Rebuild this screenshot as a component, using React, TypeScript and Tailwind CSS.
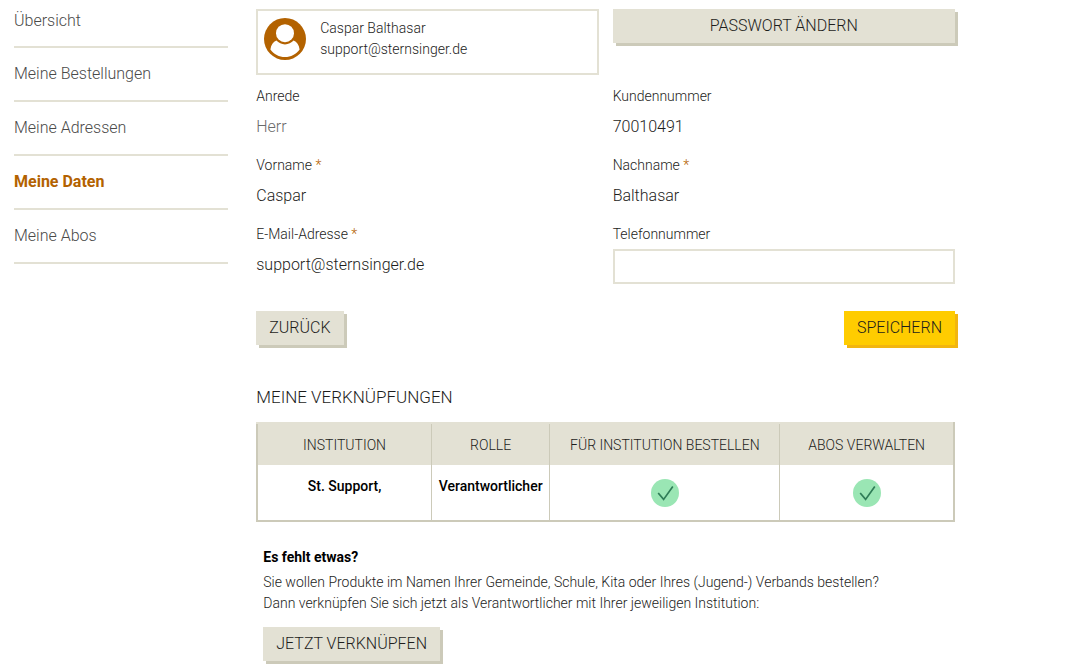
import React, { useState } from 'react';

interface NavItem {
  label: string;
  href: string;
}

interface Verknuepfung {
  institution: string;
  rolle: string;
  bestellen: boolean;
  abos: boolean;
}

const navItems: NavItem[] = [
  { label: 'Übersicht', href: '#uebersicht' },
  { label: 'Meine Bestellungen', href: '#bestellungen' },
  { label: 'Meine Adressen', href: '#adressen' },
  { label: 'Meine Daten', href: '#daten' },
  { label: 'Meine Abos', href: '#abos' },
];

const verknuepfungen: Verknuepfung[] = [
  { institution: 'St. Support,', rolle: 'Verantwortlicher', bestellen: true, abos: true },
];

const buttonBase = 'h-[34px] px-[13px] text-base text-[#1d1d1b] uppercase cursor-pointer';
const buttonSand = `${buttonBase} bg-[#e3e1d4] shadow-[3px_3px_0_#cccab9]`;
const buttonGelb = `${buttonBase} bg-[#ffcc00] shadow-[3px_3px_0_#f2b50f]`;

function Avatar() {
  return (
    <svg viewBox="0 0 42 42" className="w-[42px] h-[42px] shrink-0" aria-hidden="true">
      <circle cx="21" cy="21" r="21" fill="#b36200" />
      <circle cx="21" cy="15.2" r="9" fill="#fff" />
      <path
        d="M12.4 22.6C14.6 25 17.6 26.4 21 26.4s6.4-1.4 8.6-3.8c3.2 1.2 5.4 4.4 6 8.8C32 36.2 27 39 21 39S10 36.2 6.4 31.4c.6-4.4 2.8-7.6 6-8.8z"
        fill="#fff"
      />
    </svg>
  );
}

function CheckIcon() {
  return (
    <svg viewBox="0 0 28 28" className="w-7 h-7 mx-auto" role="img" aria-label="Ja">
      <circle cx="14" cy="14" r="14" fill="#9ae6b4" />
      <path d="M7.2 14l5.4 6.4L21.8 7.6" fill="none" stroke="#2f7d57" strokeWidth="1.7" />
    </svg>
  );
}

interface FieldProps {
  label: string;
  value: string;
  required?: boolean;
  muted?: boolean;
}

function Field({ label, value, required, muted }: FieldProps) {
  return (
    <div>
      <div className="text-sm leading-[21px]">
        {label}
        {required && <span className="text-[#b36200]"> *</span>}
      </div>
      <div className={`h-[35px] mt-1 text-base leading-[31px] ${muted ? 'text-[#6a6a6a]' : ''}`}>{value}</div>
    </div>
  );
}

export default function App() {
  const [telefon, setTelefon] = useState('');
  const active = 'Meine Daten';

  return (
    <div className="max-w-[969px] flex bg-white font-['Roboto','Liberation_Sans',sans-serif] font-light text-[#1d1d1b]">
      <nav className="w-1/4 px-[14px] pt-[9px]">
        <ul>
          {navItems.map((item) => (
            <li key={item.label} className="pt-[14px] pb-[14px] first:pt-0 first:pb-[13px] border-b-2 border-[#e3e1d4]">
              <a
                href={item.href}
                className={`block text-base leading-6 ${
                  item.label === active ? 'font-bold text-[#b36200]' : 'text-[#4a4a49]'
                }`}
              >
                {item.label}
              </a>
            </li>
          ))}
        </ul>
      </nav>

      <main className="w-3/4 px-[14px] pt-[9px] pb-1">
        <form onSubmit={(e) => e.preventDefault()}>
          <div className="grid grid-cols-2 gap-x-[14px] items-start">
            <div className="flex h-[66px] border-2 border-[#e3e1d4] px-1.5 pt-[7px]">
              <Avatar />
              <div className="ml-[14px] text-sm leading-[21px]">
                <p>Caspar Balthasar</p>
                <p>support@sternsinger.de</p>
              </div>
            </div>
            <button type="button" className={buttonSand}>
              Passwort ändern
            </button>
          </div>

          <div className="grid grid-cols-2 gap-x-[14px] gap-y-[9px] mt-[11px]">
            <Field label="Anrede" value="Herr" muted />
            <Field label="Kundennummer" value="70010491" />
            <Field label="Vorname" value="Caspar" required />
            <Field label="Nachname" value="Balthasar" required />
            <Field label="E-Mail-Adresse" value="support@sternsinger.de" required />
            <div>
              <label htmlFor="telefon" className="block text-sm leading-[21px]">
                Telefonnummer
              </label>
              <input
                id="telefon"
                type="tel"
                value={telefon}
                onChange={(e) => setTelefon(e.target.value)}
                className="block w-full h-[35px] mt-1 px-3 border-2 border-[#e3e1d4] text-base outline-none"
              />
            </div>
          </div>

          <div className="flex justify-between mt-[27px]">
            <button type="button" className={buttonSand}>
              Zurück
            </button>
            <button type="submit" className={buttonGelb}>
              Speichern
            </button>
          </div>
        </form>

        <h2 className="mt-10 text-[17px] leading-6 uppercase">Meine Verknüpfungen</h2>

        <table className="w-full mt-[13px] table-fixed border-2 border-[#cccab9] border-t-[#e3e1d4] border-collapse text-center">
          <thead className="bg-[#e3e1d4] text-sm uppercase">
            <tr className="h-[42px]">
              <th className="w-[25%] border-r border-[#cccab9] font-light">Institution</th>
              <th className="border-r border-[#cccab9] font-light">Rolle</th>
              <th className="w-[33%] border-r border-[#cccab9] font-light">Für Institution bestellen</th>
              <th className="w-[25%] font-light">Abos verwalten</th>
            </tr>
          </thead>
          <tbody>
            {verknuepfungen.map((v) => (
              <tr key={v.institution} className="h-14 text-sm leading-[21px] font-medium text-black">
                <td className="border-r border-[#cccab9] align-top pt-[11px]">{v.institution}</td>
                <td className="border-r border-[#cccab9] align-top pt-[11px]">{v.rolle}</td>
                <td className="border-r border-[#cccab9]">{v.bestellen && <CheckIcon />}</td>
                <td>{v.abos && <CheckIcon />}</td>
              </tr>
            ))}
          </tbody>
        </table>

        <section className="mt-[25px] pl-[7px]">
          <h3 className="text-sm leading-[21px] font-bold text-black">Es fehlt etwas?</h3>
          <p className="mt-1 text-sm leading-[21px]">
            Sie wollen Produkte im Namen Ihrer Gemeinde, Schule, Kita oder Ihres (Jugend-) Verbands bestellen?
            <br />
            Dann verknüpfen Sie sich jetzt als Verantwortlicher mit Ihrer jeweiligen Institution:
          </p>
          <button type="button" className={`${buttonSand} mt-[13px]`}>
            Jetzt verknüpfen
          </button>
        </section>
      </main>
    </div>
  );
}
